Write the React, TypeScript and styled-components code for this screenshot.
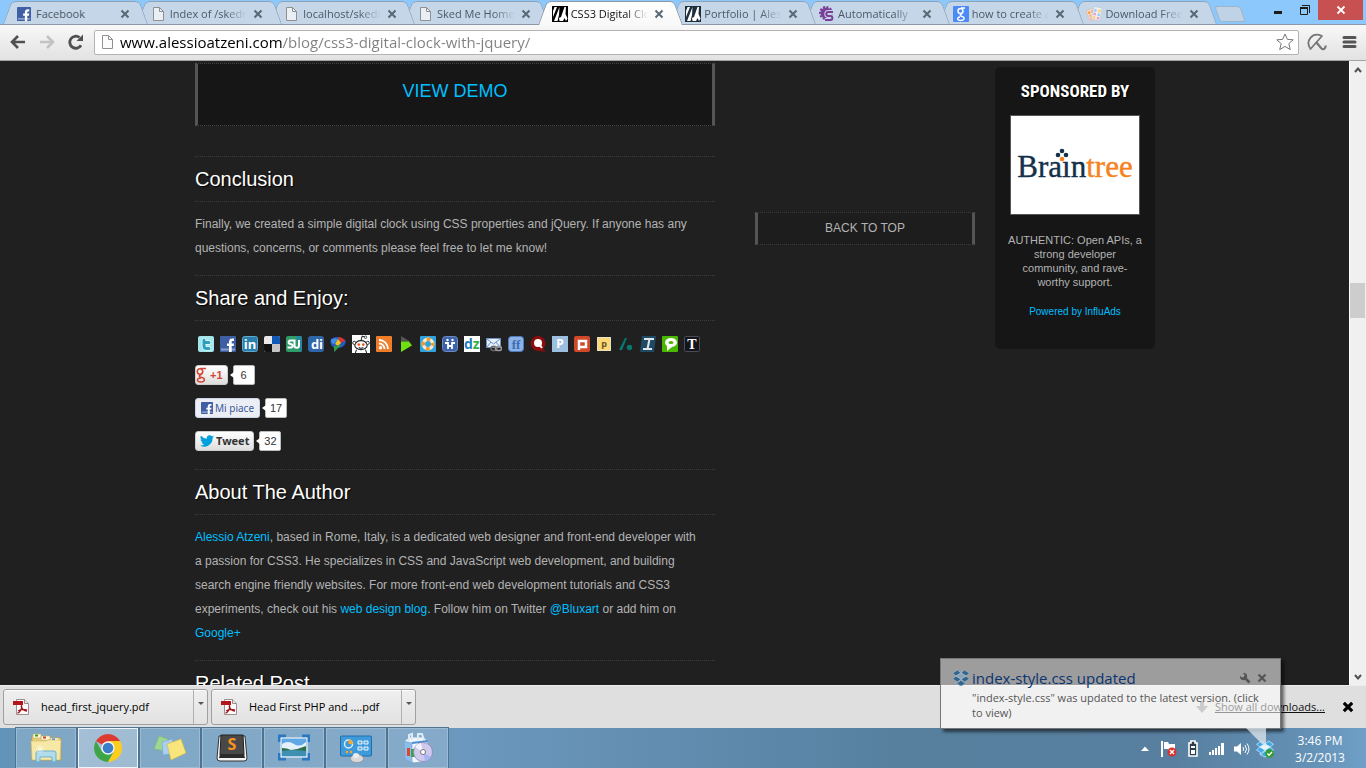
import React from "react";
import styled, { createGlobalStyle, css } from "styled-components";

const UI = `"Open Sans", "Noto Sans", sans-serif`;
const BODY = `"Liberation Sans", Arial, sans-serif`;

const GlobalStyle = createGlobalStyle`
  *, *::before, *::after { box-sizing: border-box; }
  body { margin: 0; font-family: ${BODY}; }
  h2, h3, p, ul { margin: 0; padding: 0; font-weight: normal; }
  ul { list-style: none; }
  button { margin: 0; padding: 0; border: 0; background: none; font: inherit; color: inherit; }
  a { color: #00bfff; text-decoration: none; }
  svg { display: block; flex: none; }
`;

const Screen = styled.div`
  display: flex;
  flex-direction: column;
  height: 100vh;
  overflow: hidden;
`;

/* ---------- Tab strip ---------- */

const TabStrip = styled.div`
  display: flex;
  flex: none;
  align-items: flex-end;
  height: 25px;
  padding-left: 3px;
  background: #8cc8fb;
  box-shadow: inset 0 -1px #8a98a8;
  font: 12px/16px ${UI};
`;

const TabList = styled.div`
  display: flex;
  flex: 1;
  max-width: 1203px;
  height: 25px;
`;

const Tab = styled.div<{ $active?: boolean; $order: number }>`
  position: relative;
  z-index: ${(p) => (p.$active ? 20 : p.$order)};
  display: flex;
  flex: 1 1 0;
  align-items: center;
  min-width: 0;
  padding: 2px 2px 0 14px;
  color: ${(p) => (p.$active ? "#111" : "#4c5866")};

  &::before,
  &::after {
    content: "";
    position: absolute;
    z-index: -1;
    top: 1px;
    bottom: ${(p) => (p.$active ? 0 : 1)}px;
    border: solid ${(p) => (p.$active ? "#8d9aa6" : "#8fa3b7")};
    background: ${(p) => (p.$active ? "linear-gradient(#fff, #f8f8f8)" : "#c5d6e9")};
  }
  &::before {
    left: 0;
    right: 40%;
    border-width: 1px 0 0 1px;
    border-radius: 5px 0 0 0;
    transform: skewX(-20deg);
    transform-origin: bottom;
  }
  &::after {
    left: 50%;
    right: -11px;
    border-width: 1px 1px 0 0;
    border-radius: 0 5px 0 0;
    transform: skewX(20deg);
    transform-origin: bottom;
  }
`;

const TabLabel = styled.button`
  display: grid;
  grid-template-columns: 16px minmax(0, 1fr);
  flex: 1;
  gap: 3px;
  align-items: center;
  min-width: 0;
  font-size: 11px;
  text-align: left;
  white-space: nowrap;
`;

const TabText = styled.span<{ $fade?: boolean }>`
  overflow: hidden;
  ${(p) => p.$fade && css`mask-image: linear-gradient(to right, #000 calc(100% - 22px), transparent);`}
`;

const TabClose = styled.button`
  width: 10px;
  height: 10px;
  margin: 0 5px 0 6px;
  color: #5a6874;
`;

const NewTab = styled.button`
  width: 26px;
  height: 16px;
  margin: 0 auto 3px 11px;
  border: 1px solid #9db4c9;
  border-radius: 3px;
  background: #c0d3e6;
  transform: skewX(20deg);
`;

const WindowControls = styled.div`
  display: flex;
  align-self: flex-start;
  height: 20px;
  margin-right: 3px;
`;

const WindowButton = styled.button<{ $close?: boolean }>`
  display: grid;
  place-items: center;
  width: ${(p) => (p.$close ? 45 : 27)}px;
  color: ${(p) => (p.$close ? "#fff" : "#1b1b1b")};
  background: ${(p) => (p.$close ? "#c75050" : "transparent")};
`;

/* ---------- Toolbar ---------- */

const Toolbar = styled.div`
  display: flex;
  flex: none;
  align-items: center;
  height: 36px;
  padding: 0 5px 1px 8px;
  border-bottom: 1px solid #a3a3a3;
  background: linear-gradient(#f8f8f8, #e2e2e2);
`;

const ToolButton = styled.button<{ $gap?: number }>`
  width: 20px;
  height: 20px;
  margin-right: ${(p) => p.$gap ?? 9}px;
`;

const AddressBar = styled.form`
  display: flex;
  flex: 1;
  align-items: center;
  height: 25px;
  margin-right: 8px;
  padding: 0 4px 0 5px;
  border: 1px solid #b3b3b3;
  border-radius: 2px;
  background: #fff;
`;

const AddressInput = styled.input`
  flex: 1;
  min-width: 0;
  height: 22px;
  margin-left: 4px;
  padding: 0;
  border: 0;
  outline: 0;
  background: linear-gradient(to right, #000 163px, #808080 163px);
  background-clip: text;
  -webkit-text-fill-color: transparent;
  font: 15px/22px ${UI};
`;

/* ---------- Page ---------- */

const Viewport = styled.div`
  display: flex;
  flex: 1;
  min-height: 0;
`;

const Page = styled.main`
  flex: 1;
  min-width: 0;
  overflow: hidden;
  background: #202020;
  color: #b3b3b3;
  font-size: 12px;
`;

const Columns = styled.div`
  display: grid;
  grid-template-columns: minmax(0, 520px) 260px 180px;
  align-items: start;
  max-width: 1001px;
  margin: 0 auto;
  padding: 0 20px 0 21px;
`;

const Article = styled.article`
  padding-top: 2px;
`;

const DemoLink = styled.a`
  display: block;
  height: 63px;
  margin-bottom: 30px;
  border: 1px dotted #444;
  border-right: 3px solid #555;
  border-left: 3px solid #555;
  background: #161616;
  font-size: 18px;
  line-height: 54px;
  text-align: center;
`;

const Section = styled.section`
  padding-bottom: 15px;
  border-top: 1px dotted #3c3c3c;
  line-height: 24px;
`;

const SectionTitle = styled.h2`
  height: 45px;
  margin-bottom: 10px;
  border-bottom: 1px dotted #3c3c3c;
  color: #fff;
  font-size: 20px;
  line-height: 44px;
  text-shadow: 1px 1px 1px #000;
`;

const ShareIcons = styled.ul`
  display: flex;
  align-items: center;
  height: 18px;
  margin: 14px 0 12px;

  a { display: block; margin: 0 3px; }
`;

const Badges = styled.div`
  display: flex;
  flex-direction: column;
  gap: 13px;
  align-items: flex-start;
  padding-bottom: 3px;
`;

const Badge = styled.div`
  display: flex;
  gap: 5px;
  height: 20px;
`;

const BadgeButton = styled.button<{ $tone: "google" | "facebook" | "twitter" }>`
  display: flex;
  align-items: center;
  border: 1px solid #ccc;
  border-radius: 3px;
  background: linear-gradient(#fff, #dedede);
  white-space: nowrap;
  ${(p) =>
    p.$tone === "google" &&
    css`
      gap: 4px;
      padding: 0 4px 0 0;
      color: #d14836;
      font: bold 11px/18px "Liberation Sans", sans-serif;
    `}
  ${(p) =>
    p.$tone === "facebook" &&
    css`
      gap: 2px;
      padding: 0 5px;
      border-color: #cad4e7;
      background: #eceef5;
      color: #3b5998;
      font: 10px/18px "Noto Sans", sans-serif;
    `}
  ${(p) =>
    p.$tone === "twitter" &&
    css`
      gap: 2px;
      padding: 0 4px;
      color: #333;
      font: bold 11px/18px "Noto Sans", sans-serif;
    `}
`;

const BadgeCount = styled.span`
  position: relative;
  min-width: 22px;
  padding: 0 3px;
  border: 1px solid #bbb;
  border-radius: 2px;
  background: #fff;
  color: #333;
  text-align: center;
  font: 11px/18px "Liberation Sans", sans-serif;

  &::before {
    content: "";
    position: absolute;
    top: 6px;
    left: -4px;
    border: 3px solid transparent;
    border-right: 4px solid #fff;
    border-left: 0;
  }
`;

const Side = styled.aside`
  padding: 151px 0 0 40px;
`;

const BackToTop = styled.a`
  display: block;
  height: 33px;
  border: 1px dotted #3c3c3c;
  border-right: 3px solid #555;
  border-left: 3px solid #555;
  background: #1d1d1d;
  color: #b3b3b3;
  line-height: 31px;
  text-align: center;
`;

const Sponsor = styled.aside`
  height: 282px;
  margin: 6px 0 0 20px;
  padding: 0 12px;
  border-radius: 5px;
  background: #161616;
  font-size: 11px;
  line-height: 14px;
  text-align: center;
`;

const SponsorTitle = styled.h3`
  color: #fff;
  font: bold 17px/48px "Liberation Sans Narrow", "Roboto Condensed", Roboto, sans-serif;
  text-shadow: 1px 1px 1px #000;
  white-space: nowrap;
`;

const SponsorAd = styled.a`
  display: block;
  width: 130px;
  height: 100px;
  margin: 0 auto 18px;
  border: 1px solid #555;
  background: #fff;
`;

const SponsorLink = styled.a`
  display: block;
  margin-top: 16px;
  font-size: 10px;
  white-space: nowrap;
`;

const ScrollBar = styled.div`
  display: flex;
  flex: none;
  flex-direction: column;
  justify-content: space-between;
  width: 17px;
  border-left: 1px solid #fff;
  background: #f0f0f0;
  color: #505050;
`;

const ScrollTrack = styled.div`
  flex: 1;
  padding: 205px 0 0;
`;

const ScrollThumb = styled.div`
  width: 15px;
  height: 35px;
  background: #cdcdcd;
`;

const ScrollButton = styled.button`
  display: grid;
  place-items: center;
  height: 17px;
`;

/* ---------- Downloads shelf ---------- */

const Shelf = styled.div`
  display: flex;
  flex: none;
  gap: 3px;
  align-items: center;
  height: 43px;
  padding: 0 12px 0 3px;
  border-top: 1px solid #ececec;
  background: #dfdfdf;
  color: #000;
  font: 11px/16px ${UI};
`;

const Download = styled.div`
  display: flex;
  width: 205px;
  height: 36px;
  border: 1px solid #a0a0a0;
  border-radius: 3px;
  background: linear-gradient(#efefef, #e2e2e2);
  box-shadow: inset 0 1px #fff;
`;

const DownloadFile = styled.button`
  display: flex;
  flex: 1;
  gap: 11px;
  align-items: center;
  padding-left: 8px;
  white-space: nowrap;
`;

const DownloadMenu = styled.button`
  width: 14px;
  border-left: 1px solid #b0b0b0;

  &::before {
    content: "";
    display: block;
    margin: -5px auto 0;
    width: 5px;
    border: 3px solid transparent;
    border-top-color: #555;
    border-bottom: 0;
  }
`;

const ShowAll = styled.a`
  display: flex;
  gap: 7px;
  align-items: center;
  margin: 0 14px 0 auto;
  color: #111;
  text-decoration: underline;
  white-space: nowrap;
`;

/* ---------- Taskbar ---------- */

const Taskbar = styled.div`
  display: flex;
  flex: none;
  align-items: stretch;
  height: 40px;
  padding-left: 16px;
  background: linear-gradient(90deg, #6293b9 0, #6b98be 34%, #57809f 66%, #587f9f 86%, #6491b6 96%, #70a0c8);
  font: 11px/16px ${UI};
`;

const TaskButton = styled.button<{ $active?: boolean }>`
  display: grid;
  place-items: center;
  width: 60px;
  margin-right: 2px;
  border: 1px solid ${(p) => (p.$active ? "#eef5fa" : "#9dbbd3")};
  outline: 1px solid #4f7491;
  background: ${(p) => (p.$active ? "linear-gradient(135deg, #a5c0d6, #9dbad0)" : "rgba(255,255,255,.18)")};
`;

const Tray = styled.div`
  display: flex;
  align-items: center;
  gap: 6px;
  margin-left: auto;
  padding-top: 2px;
`;

const TrayButton = styled.button`
  width: 18px;
  height: 18px;
`;

const Clock = styled.time`
  width: 100px;
  margin-left: -8px;
  padding: 4px 0 0 8px;
  color: #fff;
  font-size: 12px;
  line-height: 17px;
  text-align: center;
`;

/* ---------- Notification balloon ---------- */

const Balloon = styled.div`
  position: absolute;
  right: 85px;
  bottom: 39px;
  z-index: 30;
  width: 341px;
  height: 71px;
  padding: 9px 11px;
  border: 1px solid #777;
  background: rgba(255, 255, 255, 0.56);
  box-shadow: 3px 3px 3px rgba(0, 0, 0, 0.55);
  color: #555;
  font: 11px/15px ${UI};
`;

const BalloonHead = styled.div`
  display: flex;
  align-items: center;
  height: 20px;
  margin-bottom: 2px;
  color: #0c3470;
  font-size: 15px;
`;

const BalloonTitle = styled.strong`
  flex: 1;
  margin-left: 2px;
  font-weight: normal;
  white-space: nowrap;
`;

const BalloonAction = styled.button`
  width: 12px;
  height: 12px;
  margin-left: 6px;
  color: #555;
`;

const BalloonBody = styled.p`
  padding-left: 20px;
  white-space: nowrap;
`;

const BalloonTail = styled.svg`
  position: absolute;
  top: 69px;
  right: 14px;
`;

/* ---------- Icons ---------- */

const Cross = ({ w = 2, size = 10 }: { w?: number; size?: number }) => (
  <svg width={size} height={size} viewBox="0 0 10 10">
    <path d="M1.5 1.5l7 7M8.5 1.5l-7 7" stroke="currentColor" strokeWidth={w} fill="none" />
  </svg>
);

const PageIcon = () => (
  <svg width="16" height="16" viewBox="0 0 16 16">
    <path d="M2.5 1.5h6l4 4v9h-10z" fill="#fafafa" fillOpacity=".7" stroke="#909090" />
    <path d="M8.5 1.5v4h4" fill="none" stroke="#909090" />
  </svg>
);

const FacebookIcon = ({ size = 16 }: { size?: number }) => (
  <svg width={size} height={size} viewBox="0 0 16 16">
    <rect width="16" height="16" rx="1" fill="#3f5fa5" />
    <path d="M1 12.500h14v2H1z" fill="#8ca0cc" />
    <path d="M9 16v-6H7V7.500h2V6c0-2.500 1.300-3.500 3.300-3.500H14V5h-1.200C11.900 5 11.700 5.400 11.700 6v1.500H14L13.700 10h-2v6z" fill="#fff" />
  </svg>
);

const AtzeniIcon = ({ bg = "#000" }: { bg?: string }) => (
  <svg width="16" height="16" viewBox="0 0 16 16">
    <rect width="16" height="16" fill={bg} />
    <path d="M2.500 1H5L1 11V5zM7.500 1L2 15h3.500L7 9zM12.500 1H14l-.500 7 2 4.500L14 15l-1.500-3-1.500 3H7.500l-.500-3 2-1z" fill="#fff" />
  </svg>
);

const GearIcon = () => (
  <svg width="16" height="16" viewBox="0 0 16 16">
    <circle cx="7" cy="7" r="5.500" fill="#7b3f98" />
    <circle cx="7" cy="7" r="6" fill="none" stroke="#7b3f98" strokeWidth="2" strokeDasharray="2 1.500" />
    <path d="M14 6H9.500C6.500 6 6.500 10 9.500 10h2c2.500 0 2.500 4 0 4H6" fill="none" stroke="#c5d6e9" strokeWidth="4" />
    <path d="M14 6H9.500C6.500 6 6.500 10 9.500 10h2c2.500 0 2.500 4 0 4H6" fill="none" stroke="#7b3f98" strokeWidth="2" />
  </svg>
);

const GoogleIcon = () => (
  <svg width="16" height="16" viewBox="0 0 16 16">
    <rect width="16" height="16" rx="1" fill="#4c8bf5" />
    <circle cx="7.500" cy="5" r="2.500" fill="none" stroke="#fff" strokeWidth="1.500" />
    <path d="M8 2h4M9 8c-3 1-2 2 0 2.500 4 1 2 4-1.500 4s-4-3-.5-3.500" fill="none" stroke="#fff" strokeWidth="1.300" />
  </svg>
);

const SwatchIcon = () => (
  <svg width="16" height="16" viewBox="0 0 16 16">
    <g transform="rotate(-20 6 8)">
      <rect x="1.500" y="3" width="8" height="11" rx="1" fill="#f7e3d8" stroke="#e0b59c" strokeWidth=".6" />
      <path d="M2.500 4.500h2.500v2.500H2.500z" fill="#f3a33c" />
      <path d="M6 4.500h2.500v2.500H6zM2.500 11h2.500v2H2.500z" fill="#f0a0b4" />
      <path d="M2.500 8h2.500v2H2.500z" fill="#f0b48c" />
    </g>
    <g transform="rotate(10 10 8)">
      <rect x="6.500" y="1" width="8.500" height="13" rx="1" fill="#f4f0f4" stroke="#b9c6d2" strokeWidth=".6" />
      <path d="M7.500 3H10v3H7.500zM11.500 7H14v2.500h-2.500z" fill="#9ccff0" />
      <path d="M11.500 3H14v3h-2.500zM7.500 10.500H10v2.500H7.500z" fill="#f6d272" />
      <path d="M7.500 7H10v2.500H7.500zM11.500 10.500H14v2.500h-2.500z" fill="#f19cc0" />
    </g>
  </svg>
);

const BackIcon = ({ color }: { color: string }) => (
  <svg width="20" height="20" viewBox="0 0 20 20">
    <path d="M10 4L4 10l6 6M4.500 10H17" fill="none" stroke={color} strokeWidth="2.600" />
  </svg>
);

const ReloadIcon = () => (
  <svg width="20" height="20" viewBox="0 0 20 20">
    <path d="M15 13.200A6 6 0 1 1 13.500 5.500" fill="none" stroke="#505050" strokeWidth="2.800" />
    <path d="M17 2.500V9h-6.500z" fill="#505050" />
  </svg>
);

const UmbrellaIcon = () => (
  <svg width="20" height="20" viewBox="0 0 20 20">
    <path d="M3.500 17C-2 9 5-.5 15 4z" fill="none" stroke="#777" strokeWidth="1.800" strokeLinejoin="round" />
    <path d="M9 10l5.500 6.500c1.500 1.500 4.500.500 4-3" fill="none" stroke="#777" strokeWidth="2.200" />
  </svg>
);

type TileProps = { bg: string; fg?: string; label: string; size?: number; font?: string; x?: number; y?: number; r?: number; stroke?: string };
const Tile = ({ bg, fg = "#fff", label, size = 12, font = "Open Sans", x = 8, y = 12, r = 2, stroke = "none" }: TileProps) => (
  <svg width="16" height="16" viewBox="0 0 16 16">
    <rect x=".5" y=".5" width="15" height="15" rx={r} fill={bg} stroke={stroke === "none" ? bg : stroke} />
    <text x={x} y={y} textAnchor="middle" fontFamily={font} fontWeight="bold" fontSize={size} fill={fg}>
      {label}
    </text>
  </svg>
);

const Art = ({ children, size = 16 }: { children: React.ReactNode; size?: number }) => (
  <svg width={size} height={size} viewBox="0 0 16 16">
    {children}
  </svg>
);

const shareItems: { name: string; icon: React.ReactNode }[] = [
  {
    name: "Twitter",
    icon: (
      <Art>
        <rect width="16" height="16" rx="2" fill="#a3e6ec" />
        <path d="M6 4v6c0 2 1 2.500 2.500 2.500H11M6 6.500h5" fill="none" stroke="#e8fbfd" strokeWidth="4.500" strokeLinecap="round" />
        <path d="M6 4v6c0 2 1 2.500 2.500 2.500H11M6 6.500h5" fill="none" stroke="#2f9fc0" strokeWidth="3" strokeLinecap="round" />
      </Art>
    ),
  },
  { name: "Facebook", icon: <FacebookIcon /> },
  { name: "LinkedIn", icon: <Tile bg="#2a7fae" label="in" size={13} y={13} stroke="#5fa8cc" /> },
  {
    name: "Delicious",
    icon: (
      <Art>
        <rect width="16" height="16" rx="2" fill="#e8e8e8" />
        <path d="M8 0h6a2 2 0 0 1 2 2v6H8z" fill="#1158b8" />
        <path d="M0 8h8v8H2a2 2 0 0 1-2-2z" fill="#111" />
        <path d="M8 8h8v6a2 2 0 0 1-2 2H8z" fill="#c4c4c4" />
      </Art>
    ),
  },
  {
    name: "StumbleUpon",
    icon: (
      <Art>
        <rect width="16" height="16" rx="2" fill="#2f9d68" />
        <path d="M10 0h4a2 2 0 0 1 2 2v12a2 2 0 0 1-2 2z" fill="#2787a0" />
        <path d="M1.500 11.500h3.500C7.500 11.500 7 8 4.500 8S2 4.500 4.500 4.500H8.500v5c0 3 4.500 3 4.500 0V4" fill="none" stroke="#fff" strokeWidth="2" />
      </Art>
    ),
  },
  { name: "Digg", icon: <Tile bg="#2f66a8" label="di" size={13} x={9} y={13} /> },
  {
    name: "Buzz",
    icon: (
      <Art>
        <path d="M1 3q7-5 15 2-1 7-8 7l-4 4v-4Q-1 8 1 3z" fill="#2458c4" />
        <path d="M1 4q3-3 7-1L4 8q-3 0-3-4z" fill="#3f8ee8" />
        <path d="M8 1q5 0 7 4l-5 2z" fill="#d8362a" />
        <path d="M5 8l3-5 3 4-3 3z" fill="#f4c418" />
        <path d="M4 10l8-1-4 3-4 4z" fill="#2f9d3c" />
      </Art>
    ),
  },
  {
    name: "Reddit",
    icon: (
      <Art size={18}>
        <rect width="16" height="16" fill="#fff" />
        <ellipse cx="8" cy="9" rx="5.500" ry="4" fill="#fff" stroke="#222" />
        <circle cx="2" cy="7" r="1.400" fill="#fff" stroke="#222" strokeWidth=".8" />
        <circle cx="14" cy="7" r="1.400" fill="#fff" stroke="#222" strokeWidth=".8" />
        <path d="M8 5l1-4 3 1M4 13l-1 3M12 13l1 3M6 11c1 1 3 1 4 0" fill="none" stroke="#222" strokeWidth=".9" />
        <circle cx="12" cy="2" r="1.100" fill="#fff" stroke="#222" strokeWidth=".7" />
        <circle cx="6" cy="8.500" r="1.200" fill="#f4511e" />
        <circle cx="10" cy="8.500" r="1.200" fill="#f4511e" />
      </Art>
    ),
  },
  {
    name: "RSS",
    icon: (
      <Art>
        <rect width="16" height="16" rx="1" fill="#ee7e2a" />
        <circle cx="4.500" cy="11.800" r="1.700" fill="#fff" />
        <path d="M3 7.500a5.500 5.500 0 0 1 5.500 5.500M3 4a9 9 0 0 1 9 9" fill="none" stroke="#fff" strokeWidth="1.800" />
      </Art>
    ),
  },
  {
    name: "Netvibes",
    icon: (
      <Art>
        <path d="M3 0l9 5.500H3z" fill="#555" />
        <path d="M3 5.500h8l3 4L3 16z" fill="#6fe010" />
      </Art>
    ),
  },
  {
    name: "Bookmark ring",
    icon: (
      <Art>
        <rect width="16" height="16" rx="1" fill="#2ea3dc" />
        <circle cx="8" cy="8" r="4.700" fill="none" stroke="#f6e8d4" strokeWidth="3.500" />
        <circle cx="8" cy="8" r="4.700" fill="none" stroke="#f09a2c" strokeWidth="3.500" strokeDasharray="3.690" strokeDashoffset="1.850" />
      </Art>
    ),
  },
  {
    name: "Identi",
    icon: (
      <Art>
        <rect x=".5" y=".5" width="15" height="15" rx="3" fill="#3c62ac" stroke="#6b8ac4" />
        <path d="M3 7h3v6M10 13V7h3M6 10h4" fill="none" stroke="#fff" strokeWidth="1.800" />
        <circle cx="5.500" cy="4" r="1.200" fill="#fff" />
        <circle cx="10.500" cy="4" r="1.200" fill="#fff" />
      </Art>
    ),
  },
  {
    name: "DZone",
    icon: (
      <Art>
        <rect width="16" height="16" fill="#fff" />
        <text x="0" y="13" fontFamily="Open Sans" fontWeight="bold" fontSize="14" fill="#1c7fc4">
          d<tspan fill="#3bae49">z</tspan>
        </text>
      </Art>
    ),
  },
  {
    name: "Email",
    icon: (
      <Art>
        <path d="M.5 2.500h14v9H.5z" fill="#e6effa" stroke="#6c93c4" />
        <path d="M1 3l6.500 5L14 3M1 11l4-5M14 11l-4-5" fill="none" stroke="#6c93c4" />
        <rect x="5" y="10.500" width="6" height="4" rx="2" fill="none" stroke="#666" strokeWidth="1.600" />
        <rect x="9.500" y="10.500" width="6" height="4" rx="2" fill="none" stroke="#999" strokeWidth="1.600" />
      </Art>
    ),
  },
  { name: "FriendFeed", icon: <Tile bg="#8db3e4" fg="#3a6cb4" label="ff" size={13} y={13} r={3} stroke="#4b7cc0" font="Liberation Serif" /> },
  {
    name: "Quora",
    icon: (
      <Art>
        <circle cx="8" cy="7.500" r="7.500" fill="#8c0d0d" />
        <path d="M10 10l6 6-6-1z" fill="#8c0d0d" />
        <circle cx="8" cy="7" r="4" fill="#fff" />
        <path d="M9 8l3 4" stroke="#fff" strokeWidth="2" />
      </Art>
    ),
  },
  { name: "Ping", icon: <Tile bg="#9cbfe0" label="P" size={12} r={0} /> },
  {
    name: "Plurk",
    icon: (
      <Art>
        <rect width="16" height="16" rx="2" fill="#d2492a" />
        <path d="M5 14V5h7v6H5" fill="none" stroke="#fff" strokeWidth="2.500" />
      </Art>
    ),
  },
  {
    name: "Posterous",
    icon: (
      <Art>
        <rect x="1.500" y="1.500" width="13" height="13" fill="#fbd977" stroke="#e8e0c4" />
        <text x="8" y="11" textAnchor="middle" fontFamily="Open Sans" fontWeight="bold" fontSize="9" fill="#6a5420">p</text>
      </Art>
    ),
  },
  {
    name: "Slashdot",
    icon: (
      <Art>
        <path d="M7 2h2L4 14H1z" fill="#08776e" />
        <circle cx="11.500" cy="11.500" r="2.700" fill="#08776e" />
      </Art>
    ),
  },
  {
    name: "Instapaper",
    icon: (
      <Art>
        <path d="M2 0h14l-2 16H0z" fill="#1f4a63" />
        <path d="M4 3h10M3 13h9M9.500 3l-2 10" fill="none" stroke="#dfe7ec" strokeWidth="2" />
      </Art>
    ),
  },
  {
    name: "Technorati",
    icon: (
      <Art>
        <rect width="16" height="16" rx="1" fill="#49b800" />
        <ellipse cx="9" cy="6.500" rx="6" ry="4.500" fill="#fff" />
        <path d="M5 9v6l5-4z" fill="#fff" />
        <ellipse cx="9" cy="6.500" rx="2.500" ry="1.500" fill="#49b800" />
      </Art>
    ),
  },
  { name: "Tumblr", icon: <Tile bg="#14161c" label="T" size={14} y={13} font="Liberation Serif" r={1} stroke="#4a4d55" /> },
];

const TwitterBird = () => (
  <svg width="14" height="12" viewBox="0 0 24 20">
    <path
      d="M24 2.400a10 10 0 0 1-2.800.8A4.900 4.900 0 0 0 23.300.500a9.900 9.900 0 0 1-3.100 1.200 4.900 4.900 0 0 0-8.400 4.500A14 14 0 0 1 1.700 1a4.900 4.900 0 0 0 1.500 6.600A4.900 4.900 0 0 1 1 7c0 2.300 1.600 4.400 3.900 4.900a4.900 4.900 0 0 1-2.200.1 4.900 4.900 0 0 0 4.600 3.400A9.900 9.900 0 0 1 0 17.500 14 14 0 0 0 21.500 5z"
      fill="#00a0dc"
    />
  </svg>
);

const GPlus = () => (
  <svg width="10" height="16" viewBox="0 0 10 16">
    <circle cx="4" cy="4.500" r="2.700" fill="none" stroke="#d14836" strokeWidth="1.600" />
    <path d="M4 1.500h6M5.500 7.500C2 8.500 3 10 6 10.500s3.500 4.500-1 4.500-5-4 0-4" fill="none" stroke="#d14836" strokeWidth="1.500" />
  </svg>
);

const PdfIcon = () => (
  <svg width="18" height="18" viewBox="0 0 18 18">
    <path d="M4.500 1.500h8l4 4v11h-12z" fill="#fbfbfb" stroke="#9b8f8f" />
    <path d="M12.500 1.500v4h4" fill="#e3e3e3" stroke="#9b8f8f" />
    <path d="M1 3h10v4H1z" fill="#b3151b" />
    <path d="M9.500 7c1 4-2 8-4 8M9 8c1 3 3 5 6 5M6 13c3-2 6-2 9-1" fill="none" stroke="#a3151b" strokeWidth="1.300" />
  </svg>
);

const Dropbox = ({ color, ok }: { color: string; ok?: boolean }) => (
  <svg width="18" height="18" viewBox="0 0 18 18">
    <g fill={color} stroke={ok ? "#d9effc" : "#a7b9c6"} strokeWidth=".7">
      <path d="M5.500 1L9 4 4 7 .5 4.300zM12.500 1L9 4l5 3 3.500-2.700z" />
      <path d="M.5 10L4 7l5 3-3.500 3zM17.500 10L14 7l-5 3 3.500 3z" />
      <path d="M9 4l5 3-5 3-5-3z" fill={ok ? "#e8f6ff" : "#8ba3b3"} />
      <path d="M4 13l1.500 1L9 11l3.500 3 1.500-1v1.500L9 17l-5-2.500z" />
    </g>
    {ok && (
      <g>
        <circle cx="13.500" cy="13.500" r="4.300" fill="#2f9e2f" />
        <path d="M11.300 13.500l1.700 1.700 3-3.200" fill="none" stroke="#fff" strokeWidth="1.400" />
      </g>
    )}
  </svg>
);

const FolderIcon = () => (
  <svg width="34" height="34" viewBox="0 0 34 34">
    <path d="M3 5h7l1 2h21v22H3z" fill="#e9cf7c" stroke="#b89b45" strokeWidth=".7" />
    <path d="M4 3h8v4H4zM12 5h9v4h-9zM21 7h9v4h-9z" fill="#fff8dc" stroke="#c8ae62" strokeWidth=".6" />
    <path d="M6 3.500h3v2H6z" fill="#2fa52f" />
    <path d="M14 5.500h3v2h-3z" fill="#d2402c" />
    <path d="M23 7.500h3v2h-3z" fill="#3a86d8" />
    <path d="M2 10h15l2-1h13l-1 20H3z" fill="#f7e8a6" stroke="#cdb566" strokeWidth=".6" />
    <path d="M7 31V22q0-2 2-2h16q2 0 2 2v9h-4v-5H11v5z" fill="#aadcf2" stroke="#5faed4" opacity=".9" />
    <path d="M11 14v8M7 18h8M8 15l6 6M14 15l-6 6" stroke="#fff" strokeWidth=".8" opacity=".8" />
  </svg>
);

const ChromeIcon = () => (
  <svg width="30" height="30" viewBox="-15 -15 30 30">
    <path d="M0 0L-12.100-7A14 14 0 0 1 12.100-7z" fill="#dd3b30" />
    <path d="M-12.100-7A14 14 0 0 0 0 14L6 3.500-6 3.500z" fill="#3fa648" />
    <path d="M12.100-7A14 14 0 0 1 0 14L6 3.500 0-7z" fill="#fccd1d" />
    <circle r="6.700" fill="#f4f4f4" />
    <circle r="5.300" fill="#3b7fcc" />
  </svg>
);

const NotesIcon = () => (
  <svg width="34" height="30" viewBox="0 0 34 30">
    <path d="M6 3l9 3-3 12-11-2z" fill="#9fd694" stroke="#78b56e" strokeWidth=".6" />
    <path d="M9 9l10-3 4 14-13 2z" fill="#a9cff2" stroke="#7aa8d4" strokeWidth=".6" />
    <path d="M14 11l14-5 5 14-15 7z" fill="#f8e67c" stroke="#d2b93f" strokeWidth=".6" />
  </svg>
);

const SublimeIcon = () => (
  <svg width="32" height="32" viewBox="0 0 32 32">
    <path d="M3 4h26l2 22q0 3-3 3H4q-3 0-3-3z" fill="#f4f4f4" stroke="#333" />
    <path d="M5 3h22l1 19q0 2-2 2H6q-2 0-2-2z" fill="#484848" stroke="#222" />
    <path d="M4 22h24l1 4H3z" fill="#2b2b2b" />
    <text x="16" y="18" textAnchor="middle" fontFamily="Open Sans" fontWeight="bold" fontSize="16" fill="#f7931e">S</text>
  </svg>
);

const PhotoIcon = () => (
  <svg width="32" height="28" viewBox="0 0 32 28">
    <path d="M1.500 8V2H8M24 2h6.500v6M30.500 19v6H24M8 25H1.500v-6" fill="none" stroke="#2d77c0" strokeWidth="3" />
    <rect x="3" y="4" width="26" height="19" fill="#5fa8e4" stroke="#fff" />
    <path d="M4 10q6-4 12 0t12-2v8H4z" fill="#e3f1fb" />
    <path d="M4 14q5 0 9 2 8-1 15-4v6H4z" fill="#2f6f4a" />
    <path d="M4 17q12-2 24 0v5H4z" fill="#3f8fb0" />
  </svg>
);

const PanelIcon = () => (
  <svg width="34" height="30" viewBox="0 0 34 30">
    <rect x="1.500" y="3" width="31" height="20" rx="1" fill="#3f9ada" stroke="#1f6fae" />
    <circle cx="9.500" cy="11" r="4" fill="none" stroke="#d6efff" strokeWidth="1.500" />
    <path d="M9.500 11V6.500A4.500 4.500 0 0 1 14 11z" fill="#f7a531" />
    <path d="M19 8h4v3h-4zM25 8h4v3h-4zM19 14h4v3h-4zM25 14h4v3h-4z" fill="#4fa8e0" stroke="#fff" strokeWidth=".9" />
    <circle cx="8" cy="19" r="1.300" fill="#f7a531" />
    <circle cx="12" cy="19" r="1.300" fill="#f7a531" />
    <ellipse cx="18" cy="25.500" rx="6.500" ry="4" fill="#d9d9d9" stroke="#888" strokeWidth=".6" />
    <ellipse cx="17" cy="22.500" rx="3" ry="2.500" fill="#ececec" />
  </svg>
);

const InstallerIcon = () => (
  <svg width="32" height="32" viewBox="0 0 32 32">
    <path d="M2 9l6-4h13l5 4-1 20-13 2-9-4z" fill="#f0f6fc" stroke="#8fa9c4" />
    <path d="M2 9l8 2v20l-7-4z" fill="#8bbdec" stroke="#6d9fd0" strokeWidth=".6" />
    <path d="M7 9V3l3-1v6M16 8V2h4l2 6" fill="none" stroke="#dcebf8" strokeWidth="2" />
    <path d="M10 11l16-2" stroke="#4f8fd0" strokeWidth="2" />
    <path d="M9 17h4v8H9z" fill="#37a544" />
    <path d="M5 16h3v8H5z" fill="#e0452f" />
    <circle cx="21" cy="20" r="9.500" fill="#cfc9ee" stroke="#8d87b8" strokeWidth=".8" />
    <path d="M21 20l-8-5a9 9 0 0 1 6-4z" fill="#f3f0ff" />
    <path d="M21 20l8 5a9 9 0 0 1-6 4z" fill="#a7b6f2" />
    <circle cx="21" cy="20" r="2.500" fill="#fff" stroke="#777" />
  </svg>
);

const BraintreeLogo = () => (
  <svg width="128" height="98" viewBox="0 0 128 98">
    <text x="64" y="61" textAnchor="middle" fontFamily="Liberation Serif" fontSize="31" fill="#14304a" stroke="#14304a" strokeWidth=".4">
      Bra&#305;n<tspan fill="#f58220" stroke="#f58220">tree</tspan>
    </text>
    <g fill="#14304a">
      <circle cx="51" cy="35" r="2.300" />
      <circle cx="47" cy="39" r="2.300" />
      <circle cx="55" cy="39" r="2.300" />
    </g>
    <circle cx="51" cy="43" r="2.300" fill="#f58220" />
  </svg>
);

/* ---------- Data ---------- */

const tabs: { label: string; icon: React.ReactNode; active?: boolean; fade?: boolean }[] = [
  { label: "Facebook", icon: <FacebookIcon size={14} /> },
  { label: "Index of /skedme", icon: <PageIcon />, fade: true },
  { label: "localhost/skedme", icon: <PageIcon />, fade: true },
  { label: "Sked Me Home", icon: <PageIcon />, fade: true },
  { label: "CSS3 Digital Clock", icon: <AtzeniIcon />, active: true, fade: true },
  { label: "Portfolio | Alessio", icon: <AtzeniIcon bg="#1f2e3d" />, fade: true },
  { label: "Automatically", icon: <GearIcon />, fade: true },
  { label: "how to create a", icon: <GoogleIcon />, fade: true },
  { label: "Download Free", icon: <SwatchIcon />, fade: true },
];

const tasks = [
  { name: "File Explorer", icon: <FolderIcon /> },
  { name: "Google Chrome", icon: <ChromeIcon />, active: true },
  { name: "Sticky Notes", icon: <NotesIcon /> },
  { name: "Sublime Text", icon: <SublimeIcon /> },
  { name: "Photo Viewer", icon: <PhotoIcon /> },
  { name: "Control Panel", icon: <PanelIcon /> },
  { name: "Installer", icon: <InstallerIcon /> },
];

const trayItems = [
  {
    name: "Action Center",
    icon: (
      <>
        <path d="M2 1v16" stroke="#fff" strokeWidth="2" />
        <path d="M4 2h4l1 2h6v7H9L8 9H4z" fill="#fff" />
        <circle cx="12" cy="12" r="4.500" fill="#d8322c" />
        <path d="M10 10l4 4M14 10l-4 4" stroke="#fff" strokeWidth="1.400" />
      </>
    ),
  },
  {
    name: "Battery",
    icon: (
      <>
        <path d="M7 3V1h4v2h2v13H5V3z" fill="#2b3d4c" stroke="#fff" strokeWidth="1.600" />
        <path d="M7 6h4v2H7zM7 10h4v4H7z" fill="#fff" />
      </>
    ),
  },
  {
    name: "Network",
    icon: <path d="M1 12h2v3H1zM4 10h2v5H4zM7 8h2v7H7zM10 6h2v9h-2zM13 3h3v12h-3z" fill="#fff" />,
  },
  {
    name: "Volume",
    icon: (
      <>
        <path d="M2 6.500h3L9 3v12l-4-3.500H2z" fill="#fff" />
        <path d="M11 7q1.500 2 0 4M13 5q3 4 0 8M15 3.500q4 5.500 0 11" fill="none" stroke="#fff" />
      </>
    ),
  },
];

export default function App() {
  return (
    <>
      <GlobalStyle />
      <Screen>
        <TabStrip>
          <TabList>
            {tabs.map((tab, i) => (
              <Tab key={tab.label} $active={tab.active} $order={tabs.length - i}>
                <TabLabel type="button">
                  {tab.icon}
                  <TabText $fade={tab.fade}>{tab.label}</TabText>
                </TabLabel>
                <TabClose type="button" aria-label={`Close ${tab.label}`}>
                  <Cross />
                </TabClose>
              </Tab>
            ))}
          </TabList>
          <NewTab type="button" aria-label="New tab" />
          <WindowControls>
            <WindowButton type="button" aria-label="Minimize">
              <svg width="8" height="10" viewBox="0 0 8 10">
                <path d="M0 6h8v3H0z" fill="currentColor" />
              </svg>
            </WindowButton>
            <WindowButton type="button" aria-label="Restore">
              <svg width="10" height="10" viewBox="0 0 10 10">
                <path d="M2 .500h7.500V8M.500 3h7v6.500h-7z" fill="none" stroke="currentColor" />
                <path d="M0 2h8v2H0z" fill="currentColor" />
              </svg>
            </WindowButton>
            <WindowButton type="button" $close aria-label="Close window">
              <Cross w={1.800} />
            </WindowButton>
          </WindowControls>
        </TabStrip>

        <Toolbar>
          <ToolButton type="button" aria-label="Back">
            <BackIcon color="#505050" />
          </ToolButton>
          <ToolButton type="button" aria-label="Forward">
            <svg width="20" height="20" viewBox="0 0 20 20">
              <path d="M10 4l6 6-6 6M15.500 10H3" fill="none" stroke="#c2c2c2" strokeWidth="2.600" />
            </svg>
          </ToolButton>
          <ToolButton type="button" aria-label="Reload" $gap={8}>
            <ReloadIcon />
          </ToolButton>
          <AddressBar>
            <PageIcon />
            <AddressInput aria-label="Address" defaultValue="www.alessioatzeni.com/blog/css3-digital-clock-with-jquery/" />
            <svg width="18" height="18" viewBox="0 0 18 18">
              <path d="M9 1l2.400 5.400 5.800.4-4.400 3.900 1.500 5.900L9 13.400l-5.300 3.200 1.500-5.900L.800 6.800l5.800-.4z" fill="#fff" stroke="#777" strokeLinejoin="round" />
            </svg>
          </AddressBar>
          <ToolButton type="button" aria-label="Weather" $gap={14}>
            <UmbrellaIcon />
          </ToolButton>
          <ToolButton type="button" aria-label="Menu" $gap={0}>
            <svg width="20" height="20" viewBox="0 0 20 20">
              <path d="M3 5.500h11M3 10h11M3 14.500h11" stroke="#555" strokeWidth="3" strokeLinecap="round" />
            </svg>
          </ToolButton>
        </Toolbar>

        <Viewport>
          <Page>
            <Columns>
              <Article>
                <DemoLink href="#demo">VIEW DEMO</DemoLink>
                <Section>
                  <SectionTitle>Conclusion</SectionTitle>
                  <p>
                    Finally, we created a simple digital clock using CSS properties and jQuery. If anyone has any
                    <br />
                    questions, concerns, or comments please feel free to let me know!
                  </p>
                </Section>
                <Section>
                  <SectionTitle>Share and Enjoy:</SectionTitle>
                  <ShareIcons>
                    {shareItems.map((item) => (
                      <li key={item.name}>
                        <a href="#share" aria-label={item.name}>
                          {item.icon}
                        </a>
                      </li>
                    ))}
                  </ShareIcons>
                  <Badges>
                    <Badge>
                      <BadgeButton type="button" $tone="google">
                        <GPlus />
                        +1
                      </BadgeButton>
                      <BadgeCount>6</BadgeCount>
                    </Badge>
                    <Badge>
                      <BadgeButton type="button" $tone="facebook">
                        <FacebookIcon size={12} />
                        Mi piace
                      </BadgeButton>
                      <BadgeCount>17</BadgeCount>
                    </Badge>
                    <Badge>
                      <BadgeButton type="button" $tone="twitter">
                        <TwitterBird />
                        Tweet
                      </BadgeButton>
                      <BadgeCount>32</BadgeCount>
                    </Badge>
                  </Badges>
                </Section>
                <Section>
                  <SectionTitle>About The Author</SectionTitle>
                  <p>
                    <a href="#author">Alessio Atzeni</a>, based in Rome, Italy, is a dedicated web designer and front-end
                    developer with
                    <br />
                    a passion for CSS3. He specializes in CSS and JavaScript web development, and building
                    <br />
                    search engine friendly websites. For more front-end web development tutorials and CSS3
                    <br />
                    experiments, check out his <a href="#blog">web design blog</a>. Follow him on Twitter{" "}
                    <a href="#twitter">@Bluxart</a> or add him on
                    <br />
                    <a href="#google">Google+</a>
                  </p>
                </Section>
                <Section>
                  <SectionTitle>Related Post</SectionTitle>
                </Section>
              </Article>
              <Side>
                <BackToTop href="#top">BACK TO TOP</BackToTop>
              </Side>
              <Sponsor>
                <SponsorTitle>SPONSORED BY</SponsorTitle>
                <SponsorAd href="#sponsor" aria-label="Braintree">
                  <BraintreeLogo />
                </SponsorAd>
                <p>
                  AUTHENTIC: Open APIs, a
                  <br />
                  strong developer
                  <br />
                  community, and rave-
                  <br />
                  worthy support.
                </p>
                <SponsorLink href="#influads">Powered by InfluAds</SponsorLink>
              </Sponsor>
            </Columns>
          </Page>
          <ScrollBar>
            <ScrollButton type="button" aria-label="Scroll up">
              <svg width="8" height="8" viewBox="0 0 8 8">
                <path d="M1 6l3-3.500L7 6" fill="none" stroke="currentColor" strokeWidth="2" />
              </svg>
            </ScrollButton>
            <ScrollTrack>
              <ScrollThumb />
            </ScrollTrack>
            <ScrollButton type="button" aria-label="Scroll down">
              <svg width="8" height="8" viewBox="0 0 8 8">
                <path d="M1 2l3 3.500L7 2" fill="none" stroke="currentColor" strokeWidth="2" />
              </svg>
            </ScrollButton>
          </ScrollBar>
        </Viewport>

        <Shelf>
          {["head_first_jquery.pdf", "Head First PHP and ....pdf"].map((file) => (
            <Download key={file}>
              <DownloadFile type="button">
                <PdfIcon />
                {file}
              </DownloadFile>
              <DownloadMenu type="button" aria-label={`Options for ${file}`} />
            </Download>
          ))}
          <ShowAll href="#downloads">
            <svg width="12" height="12" viewBox="0 0 12 12">
              <path d="M4 0h4v5h4l-6 7-6-7h4z" fill="#888" />
            </svg>
            Show all downloads...
          </ShowAll>
          <button type="button" aria-label="Close downloads bar">
            <Cross w={2.600} size={12} />
          </button>
        </Shelf>

        <Taskbar>
          {tasks.map((task) => (
            <TaskButton key={task.name} type="button" aria-label={task.name} $active={task.active}>
              {task.icon}
            </TaskButton>
          ))}
          <Tray>
            <TrayButton type="button" aria-label="Show hidden icons">
              <svg width="18" height="18" viewBox="0 0 18 18">
                <path d="M9 6.500l4 4.500H5z" fill="#fff" />
              </svg>
            </TrayButton>
            {trayItems.map((item) => (
              <TrayButton key={item.name} type="button" aria-label={item.name}>
                <svg width="18" height="18" viewBox="0 0 18 18">
                  {item.icon}
                </svg>
              </TrayButton>
            ))}
            <TrayButton type="button" aria-label="Dropbox">
              <Dropbox color="#3fa9e8" ok />
            </TrayButton>
          </Tray>
          <Clock>
            3:46 PM
            <br />
            3/2/2013
          </Clock>
        </Taskbar>

        <Balloon role="status">
          <BalloonHead>
            <Dropbox color="#33658f" />
            <BalloonTitle>index-style.css updated</BalloonTitle>
            <BalloonAction type="button" aria-label="Options">
              <svg width="12" height="12" viewBox="0 0 12 12">
                <path d="M5 5l5.500 5.500" stroke="currentColor" strokeWidth="2.600" />
                <path d="M4 1a3.200 3.200 0 0 1 3 5.500L6.500 7A3.200 3.200 0 0 1 1 4l2 1.500L5 5l.500-2z" fill="currentColor" />
              </svg>
            </BalloonAction>
            <BalloonAction type="button" aria-label="Dismiss">
              <Cross w={2.200} />
            </BalloonAction>
          </BalloonHead>
          <BalloonBody>
            "index-style.css" was updated to the latest version. (click
            <br />
            to view)
          </BalloonBody>
          <BalloonTail width="20" height="20" viewBox="0 0 20 20">
            <path d="M0 0h20v20z" fill="#dfe8ef" fillOpacity=".75" />
          </BalloonTail>
        </Balloon>
      </Screen>
    </>
  );
}
